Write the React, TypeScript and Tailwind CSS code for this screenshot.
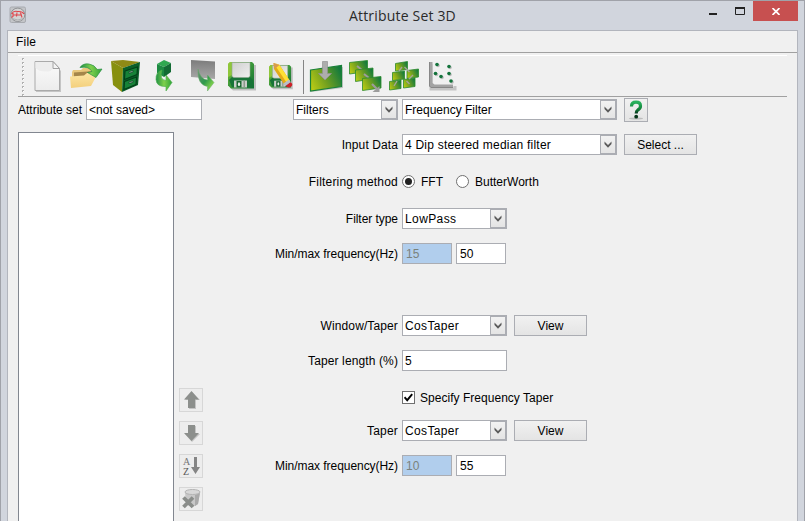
import type { ReactNode } from "react";

function Icon({ x, children }: { x: number; children: ReactNode }) {
  return (
    <svg width="36" height="36" viewBox={`${x} 58 36 36`} className="block shrink-0">
      {children}
    </svg>
  );
}

function Field({ value, className, disabled }: { value: string; className: string; disabled?: boolean }) {
  return (
    <div
      className={`flex h-[21px] shrink-0 items-center border border-[#abadb3] whitespace-pre ${
        disabled ? "bg-[#b1ceed] text-[#7b827c]" : "bg-white"
      } ${className}`}
    >
      {value}
    </div>
  );
}

function Combo({ value, className }: { value: string; className: string }) {
  return (
    <div className={`flex h-[21px] shrink-0 items-center border border-[#abadb3] bg-white pl-[2px] whitespace-pre ${className}`}>
      <span className="flex-1">{value}</span>
      <span className="flex h-[19px] w-4 items-center justify-center border border-[#abadb3] bg-gradient-to-b from-[#f2f2f2] to-[#e4e4e4]">
        <svg width="8" height="7" viewBox="0 0 8 7">
          <path d="M0.5 0.5 4 4 7.5 0.5V3L4 6.7.5 3z" fill="#5a5a5a" />
        </svg>
      </span>
    </div>
  );
}

function Button({ children, className = "" }: { children: ReactNode; className?: string }) {
  return (
    <button
      className={`flex h-[21px] w-[73px] shrink-0 items-center justify-center border border-[#abadb3] bg-gradient-to-b from-[#f1f1f1] to-[#e4e4e4] ${className}`}
    >
      {children}
    </button>
  );
}

function Row({
  label,
  className,
  labelClass = "",
  children,
}: {
  label: string;
  className: string;
  labelClass?: string;
  children: ReactNode;
}) {
  return (
    <div className={`flex h-[21px] items-center ${className}`}>
      <span className={`mr-1 w-[195px] shrink-0 text-right whitespace-nowrap ${labelClass}`}>{label}</span>
      {children}
    </div>
  );
}

function SideButton({ children }: { children: ReactNode }) {
  return (
    <div className="flex size-6 items-center justify-center border border-[#d7d7d7] bg-[#ededed]">
      <svg width="22" height="22" viewBox="0 0 22 22">
        {children}
      </svg>
    </div>
  );
}

function Floppy({ x, y, s }: { x: number; y: number; s: number }) {
  return (
    <g transform={`translate(${x} ${y}) scale(${s})`}>
      <path d="M3 3h25v25.500H5l-3-3z" fill="#777" opacity=".4" />
      <path d="M2 0h22l2 2v24.500H3l-3-3V2z" fill="url(#floppy)" />
      <path d="M0 2l2-2h2v13l-4 2z" fill="#8fc63a" />
      <path d="M1 18l3-3h18l3 3v7H4z" fill="#187438" />
      <path d="M4 .5h18v13q0 2-2 2H6q-2 0-2-2z" fill="url(#paper)" stroke="#8fa68f" strokeWidth=".6" />
      <path d="M6 18.500h13v7H6z" fill="#c9cec9" />
      <rect x="8.500" y="19" width="5" height="6.500" fill="#17682f" />
      <ellipse cx="11" cy="22.200" rx="1.100" ry="2" fill="#e5f0e5" />
      <path d="M15.500 18.500h1.500v7h-1.500z" fill="#8d9a8d" />
    </g>
  );
}

function Tile({ d }: { d: string }) {
  return <path d={d} fill="url(#tile)" stroke="#2b8a2c" strokeWidth=".8" />;
}

function Defs() {
  return (
    <svg width="0" height="0" className="absolute">
      <defs>
        <linearGradient id="tile" x1="0" y1=".7" x2="1" y2=".3">
          <stop offset="0" stopColor="#b5c815" />
          <stop offset=".45" stopColor="#72a020" />
          <stop offset="1" stopColor="#147a3c" />
        </linearGradient>
        <linearGradient id="floppy" x1="0" y1="0" x2="1" y2="1">
          <stop offset="0" stopColor="#9acc36" />
          <stop offset=".45" stopColor="#3f9a3a" />
          <stop offset="1" stopColor="#117034" />
        </linearGradient>
        <linearGradient id="paper" x1="0" y1="0" x2="1" y2="1">
          <stop offset="0" stopColor="#cfcfcf" />
          <stop offset="1" stopColor="#efefef" />
        </linearGradient>
        <linearGradient id="sheet" x1="0" y1="0" x2="0" y2="1">
          <stop offset="0" stopColor="#fbfbfb" />
          <stop offset="1" stopColor="#ececec" />
        </linearGradient>
        <linearGradient id="arrow" x1="0" y1="0" x2="1" y2="0">
          <stop offset="0" stopColor="#1f8f45" />
          <stop offset=".5" stopColor="#7fd04c" />
          <stop offset="1" stopColor="#2ea23a" />
        </linearGradient>
        <linearGradient id="fade" x1="0" y1="0" x2="1" y2="1">
          <stop offset="0" stopColor="#6f8f78" />
          <stop offset=".5" stopColor="#2f9a4c" />
          <stop offset=".8" stopColor="#7fd04c" />
          <stop offset="1" stopColor="#2ea23a" />
        </linearGradient>
        <linearGradient id="folder" x1="0" y1="0" x2="0" y2="1">
          <stop offset="0" stopColor="#fde6a4" />
          <stop offset="1" stopColor="#f3cf7c" />
        </linearGradient>
        <linearGradient id="screen" x1="0" y1="0" x2="0" y2="1">
          <stop offset="0" stopColor="#7c7c7c" />
          <stop offset="1" stopColor="#a8a8a8" />
        </linearGradient>
        <linearGradient id="question" x1="0" y1="0" x2="0" y2="1">
          <stop offset="0" stopColor="#28b15c" />
          <stop offset=".6" stopColor="#13823b" />
          <stop offset="1" stopColor="#04351a" />
        </linearGradient>
      </defs>
    </svg>
  );
}

function Toolbar() {
  return (
    <div className="mx-[10px] mt-[2px] flex h-[42px] border-t border-b border-t-white border-b-[#a0a0a0] pt-[2px]">
      <svg width="11" height="38" viewBox="18 58 11 38" className="shrink-0">
        {[58, 62, 66, 70, 74, 78, 82, 86, 90, 94].map((y) => (
          <g key={y}>
            <rect x="23" y={y + 1} width="1" height="1" fill="#fff" />
            <rect x="22" y={y} width="2" height="1" fill="#b0b0b0" />
            <rect x="22" y={y + 1} width="1" height="1" fill="#b0b0b0" />
          </g>
        ))}
      </svg>
      <div className="flex gap-[3px]">
        <Icon x={29}>
          <path d="M36 63h18l7 8v21H36z" fill="#c4c4c4" />
          <path d="M35 61.500h18l6.500 7V90.500H35z" fill="url(#sheet)" stroke="#aaa" />
          <path d="M35.500 62h17v7l-2 2q-10 2-15-3z" fill="#ededed" />
          <path d="M53 61.500v7h6.500z" fill="#f4f4f4" stroke="#a0a0a0" />
        </Icon>
        <Icon x={68}>
          <path d="M72 72l1-2h8l2-2h14v8l-25 2z" fill="#e8c77c" />
          <path d="M74 72.500l20-1.500v4l-20 2z" fill="#a5864a" />
          <path d="M70 76.500l14-1 3-2.500h11l-7 13-20 2z" fill="url(#folder)" />
          <path d="M80 67.500Q83 63 89 64 95 65 97 69.500l5-.5-6 8.500-8.500-5 4.500-1Q89 66 80 67.500z" fill="url(#arrow)" stroke="#2a9046" strokeWidth=".7" />
        </Icon>
        <Icon x={107}>
          <path d="M111 61l12-1 17 2-17 6z" fill="#8f8a16" />
          <path d="M111 61l12 7-1 24-9-7z" fill="#87900f" />
          <path d="M123 68l17-6-2 23-16 7z" fill="#0b5f29" />
          <path d="M125 71l12.500-4-.5 7.500-12.500 5zM124.500 81.500l12-4.500-.5 7.500-12 5z" fill="#178238" stroke="#033f19" strokeWidth="1.100" />
          <path d="M129 71.700l4-1.300v1.600l-4 1.300zM129 82l4-1.300v1.600l-4 1.300z" fill="#8aa898" stroke="#06351b" strokeWidth=".5" />
        </Icon>
        <Icon x={146}>
          <path d="M157 64l7-4 7 3-7 4z" fill="#2fa850" />
          <path d="M157 64l7 3v10l-7-4z" fill="#1d8a42" />
          <path d="M164 67l7-4v9l-7 5z" fill="#126b33" />
          <path d="M162 70Q155.500 72 156 79.500 156.500 87 166 86.500V91l6-8.500-6-7.500v5.500Q159 80 162 70z" fill="url(#arrow)" stroke="#46ad48" strokeWidth=".6" />
        </Icon>
        <Icon x={185}>
          <path d="M191 60l24 1.500V79l-24-2z" fill="url(#screen)" />
          <path d="M198 69Q197 85 207.500 86.500V91l6.500-8.500-6.500-7.500v5Q200 79 198 69z" fill="url(#fade)" stroke="#69a86a" strokeWidth=".5" />
        </Icon>
        <Icon x={224}>
          <Floppy x={228} y={62} s={1} />
        </Icon>
        <Icon x={263}>
          <Floppy x={269} y={65} s={0.85} />
          <path d="M273.500 63l6 2 10.500 16-5.500 4-10.500-16z" fill="#e3a91a" />
          <path d="M276 63.500l3.500 1.500 10.500 16-3 2.200L275.500 66z" fill="#ffe034" />
          <path d="M273.500 63l6 2-5 4z" fill="#d99a4e" />
          <path d="M283.500 83.500l5.500-4 2 3-5.500 4z" fill="#b8bec8" />
          <path d="M285.500 86l5-3.700q3 1.700 1 4-3 2.500-6-.3z" fill="#cf2028" />
        </Icon>
      </div>
      <div className="mt-[2px] mr-1 ml-[4px] h-[34px] w-px bg-[#858585]" />
      <div className="flex gap-[3px]">
        <Icon x={308}>
          <path d="M311 71l32-4v21l-32 4z" fill="#c6c6c6" />
          <path d="M310.500 70l31-4.500v21l-31 4.500z" fill="url(#tile)" stroke="#188039" strokeWidth="1.200" />
          <path d="M322.500 61.500h5V73.500h4l-6.500 6.500-6.500-6.500h4z" fill="#adadad" stroke="#929292" strokeWidth=".7" />
        </Icon>
        <Icon x={347}>
          <Tile d="M349.500 62.500l18-2v11l-18 2.500z" />
          <path d="M357 66l5 4" stroke="#9c9c9c" strokeWidth="2" />
          <Tile d="M355.500 70l17.500-2v11l-17.500 2.500z" />
          <path d="M364 74l5 4" stroke="#9c9c9c" strokeWidth="2" />
          <Tile d="M362.500 78.500l18.500-2V88l-18.500 2.500z" />
          <path d="M372 84l5 5" stroke="#9c9c9c" strokeWidth="2.200" />
          <path d="M379.500 86v6h-7z" fill="#9c9c9c" />
        </Icon>
        <Icon x={386}>
          <Tile d="M395.500 63.500l12-2v8l-12 1.500z" />
          <Tile d="M392.500 72.500l12-1.500v8l-12 1.500z" />
          <Tile d="M407 70.500l11.500-1.500v8l-11.500 1.500z" />
          <Tile d="M389.500 81.500l11.500-1.500v8.500l-11.500 1.500z" />
          <Tile d="M403.500 79.500l11.500-1.500v8.500l-11.500 1.500z" />
          <path d="M399 71l3-4M404.500 67l5 5M394 86l3-5M409 79l4-4M406.500 81l3 3" stroke="#a4a49c" strokeWidth="1.400" />
        </Icon>
        <Icon x={425}>
          <path d="M431 64v25h24v-3" stroke="#c4c4c4" strokeWidth="3" fill="none" />
          <path d="M429 62h3.500v21l2 1.500H453V88h-22l-2-2z" fill="#a3a3a3" />
          <path d="M429.500 62v24l1.500 1.500h22" stroke="#878787" fill="none" />
          {[[437, 64.500], [449, 66.500], [435.500, 73.500], [441, 76.500], [449, 73.500], [451, 81]].map(([cx, cy]) => (
            <g key={`${cx}-${cy}`}>
              <circle cx={cx + 1} cy={cy + 1} r="1.800" fill="#bbb" />
              <circle cx={cx} cy={cy} r="1.800" fill="#13733b" />
            </g>
          ))}
        </Icon>
      </div>
    </div>
  );
}

export default function App() {
  return (
    <div className="flex h-[521px] w-[805px] flex-col overflow-hidden border border-b-0 border-[#a0a2a9] bg-[#d1d5dd] px-[6px] font-['Liberation_Sans',Arial,sans-serif] text-[12px] leading-[14px] text-black">
      <Defs />
      <header className="flex h-[29px] shrink-0">
        <svg width="18" height="18" viewBox="0 0 18 18" className="mt-[5px] ml-[2px]">
          <rect x="1" y="1" width="15.500" height="15.500" rx="1.500" fill="#c3c5c8" stroke="#a8abb0" />
          <ellipse cx="8.800" cy="8.800" rx="7" ry="6.700" fill="#d3d4d4" stroke="#8f9194" />
          <path d="M3 12.500q6 3 11.500 0" stroke="#aeb0b2" fill="none" />
          <path d="M2.500 8q2-3.500 6-2.500 5-.5 6.500 2.500M4 7v3.500l-1.500 1M8 6.500l-.5 4M11.500 6.500l1.500 5M4.500 9h7.500" stroke="#e0464c" strokeWidth="1.100" fill="none" />
        </svg>
        <h1 className="ml-[322px] w-[120px] pt-[5px] font-['Open_Sans','Noto_Sans',sans-serif] text-[14px] leading-5 tracking-[0.18px] whitespace-nowrap text-[#2a2a2a]">
          Attribute Set 3D
        </h1>
        <div className="ml-auto flex">
          <svg width="45" height="20" viewBox="708 1 45 20">
            <path d="M709 13h8v2h-8z" fill="#222" />
            <path d="M735.500 8.500h9v6h-9z" fill="none" stroke="#222" />
            <path d="M735 7h10v2h-10z" fill="#222" />
          </svg>
          <div className="flex h-5 w-[45px] items-center justify-center bg-[#c75050]">
            <svg width="8" height="7" viewBox="0 0 8 7">
              <path d="M.5 0l7 7M7.500 0l-7 7" stroke="#fff" strokeWidth="1.700" />
            </svg>
          </div>
        </div>
      </header>
      <div className="flex min-h-0 flex-1 flex-col border border-b-0 border-[#b2b5bd] bg-[#f0f0f0]">
        <nav className="flex h-[22px] shrink-0 items-center border-b border-[#a0a0a0] pl-2 tracking-[0.2px]">File</nav>
        <Toolbar />
        <main className="flex min-h-0 flex-1 pl-[10px]">
          <section className="flex w-[185px] shrink-0 flex-col">
            <div className="flex h-6 items-center pt-[1px]">
              <span className="w-[68px] whitespace-nowrap">Attribute set</span>
              <Field value="<not saved>" className="w-[116px] pl-[2px]" />
            </div>
            <div className="mt-[11px] flex min-h-0 flex-1 gap-[5px]">
              <div className="w-[156px] border border-b-0 border-[#828790] bg-white" />
              <div className="flex flex-col gap-[9px] pt-[256px]">
                <SideButton>
                  <path d="M12 3l8 8h-4v9H9v-9H5z" fill="#c4c4c4" />
                  <path d="M11.500 2l7.500 8.500h-4V19H8v-8.500H4z" fill="#8c8f8c" />
                </SideButton>
                <SideButton>
                  <path d="M9 4h7v8h4l-8 8-7-8h4z" fill="#c4c4c4" />
                  <path d="M8 3h7v8h4l-7.500 8L4 11h4z" fill="#8c8f8c" />
                </SideButton>
                <SideButton>
                  <text x="3" y="9.500" fontSize="10" fontFamily="Liberation Serif, serif" fill="#777">A</text>
                  <text x="3" y="19.500" fontSize="10" fontFamily="Liberation Serif, serif" fill="#555">Z</text>
                  <path d="M14 2h3v10h3l-4.500 7-4.500-7h3z" fill="#858585" />
                </SideButton>
                <SideButton>
                  <path d="M5 4l1 12q6 5 12 0l2-12z" fill="#c8c8c8" />
                  <path d="M15 7l5-2-2 11-3 2z" fill="#aaa" />
                  <ellipse cx="12.500" cy="4" rx="7.500" ry="2.500" fill="#d8d8d8" stroke="#b4b4b4" />
                  <path d="M3.500 9.500l9.500 9.500M13 9.500L3.500 19" stroke="#8a8d8a" strokeWidth="3.800" />
                </SideButton>
              </div>
            </div>
          </section>
          <section className="flex flex-1 flex-col">
            <div className="flex h-[25px] items-start pt-[2px] pl-[90px]">
              <Combo value="Filters" className="w-[105px]" />
              <Combo value="Frequency Filter" className="ml-1 w-[215px]" />
              <div className="-mt-px ml-[7px] flex size-6 items-center justify-center border border-[#abadb3] bg-gradient-to-b from-[#f1f1f1] to-[#e4e4e4]">
                <svg width="22" height="22" viewBox="0 0 22 22">
                  <ellipse cx="11" cy="19.500" rx="7" ry="1" fill="#bdbdbd" />
                  <path d="M6.500 7.500Q6.500 3.200 11 3.200 15.500 3.200 15.500 7 15.500 9.500 12.800 11 11.200 12 11.200 14.500" fill="none" stroke="url(#question)" strokeWidth="3.200" />
                  <circle cx="11.200" cy="17.700" r="1.900" fill="#063519" />
                </svg>
              </div>
            </div>
            <Row label="Input Data" className="mt-[12px]" labelClass="tracking-[0.1px]">
              <Combo value="4 Dip steered median filter" className="w-[215px] tracking-[0.22px]" />
              <Button className="ml-[7px]">Select ...</Button>
            </Row>
            <Row label="Filtering method" className="mt-4" labelClass="tracking-[0.2px]">
              <span className="flex size-[13px] items-center justify-center rounded-full border border-[#707070] bg-white">
                <span className="size-[7px] rounded-full bg-[#222]" />
              </span>
              <span className="ml-[6px] w-[35px]">FFT</span>
              <span className="size-[13px] rounded-full border border-[#707070] bg-white" />
              <span className="ml-[6px]">ButterWorth</span>
            </Row>
            <Row label="Filter type" className="mt-4" labelClass="tracking-[-0.05px]">
              <Combo value="LowPass" className="w-[105px] tracking-[0.4px]" />
            </Row>
            <Row label="Min/max frequency(Hz)" className="mt-[14px]" labelClass="tracking-[-0.05px]">
              <Field value="15" className="w-[50px] pl-[3px]" disabled />
              <Field value="50" className="ml-1 w-[50px] pl-[3px]" />
            </Row>
            <Row label="Window/Taper" className="mt-[51px]" labelClass="tracking-[0.12px]">
              <Combo value="CosTaper" className="w-[105px] tracking-[0.35px]" />
              <Button className="ml-[7px]">View</Button>
            </Row>
            <Row label="Taper length (%)" className="mt-[14px]" labelClass="tracking-[0.12px]">
              <Field value="5" className="w-[105px] pl-[2px]" />
            </Row>
            <Row label="" className="mt-4">
              <span className="flex size-[13px] items-center justify-center border border-[#707070] bg-white">
                <svg width="9" height="9" viewBox="0 0 9 9">
                  <path d="M.5 4.200L3.200 7.200 8.200 1.200" fill="none" stroke="#000" strokeWidth="1.900" />
                </svg>
              </span>
              <span className="ml-[5px] tracking-[0.03px]">Specify Frequency Taper</span>
            </Row>
            <Row label="Taper" className="mt-3" labelClass="tracking-[0.2px]">
              <Combo value="CosTaper" className="w-[105px] tracking-[0.35px]" />
              <Button className="ml-[7px]">View</Button>
            </Row>
            <Row label="Min/max frequency(Hz)" className="mt-[14px]" labelClass="tracking-[-0.05px]">
              <Field value="10" className="w-[50px] pl-[3px]" disabled />
              <Field value="55" className="ml-1 w-[50px] pl-[3px]" />
            </Row>
          </section>
        </main>
      </div>
    </div>
  );
}
